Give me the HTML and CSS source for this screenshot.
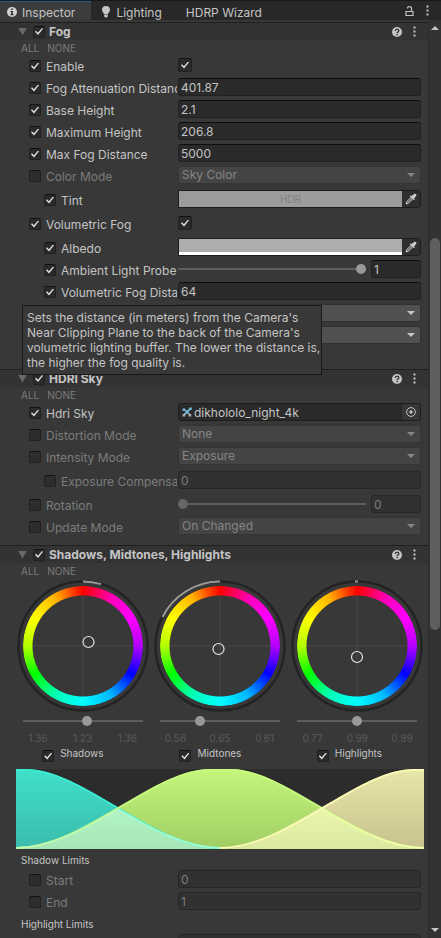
FILE: index.html
```html
<!DOCTYPE html>
<html lang="en">
<head>
<meta charset="utf-8">
<meta name="viewport" content="width=device-width, initial-scale=1">
<title>Inspector</title>
<link rel="stylesheet" href="styles.css">
</head>
<body>
<svg class="defs" width="0" height="0" aria-hidden="true">
  <symbol id="help" viewBox="0 0 10 10"><circle cx="5" cy="5" r="5" fill="#c4c4c4"/><path d="M3.3 4C3.3 1.6 6.8 1.7 6.8 3.8C6.8 5 5.1 4.9 5.1 6.2" fill="none" stroke="#323232" stroke-width="1.3"/><rect x="4.4" y="7" width="1.4" height="1.3" fill="#323232"/></symbol>
  <symbol id="dots" viewBox="0 0 3 11"><path d="M.5 .5h2v2h-2zM.5 4.5h2v2h-2zM.5 8.5h2v2h-2z" fill="#c4c4c4"/></symbol>
  <symbol id="dropper" viewBox="0 0 12 12"><path d="M1 11L1.8 8.6L6 4.4L7.6 6L3.4 10.2Z" fill="#6a6a6a" stroke="#c4c4c4" stroke-width="1"/><path d="M4.8 3.2L5.8 2.2L6.8 3L8.6 1.2Q9.8 .2 11 1.1Q11.9 2.2 10.9 3.4L9 5.2L9.9 6.2L8.8 7.3Z" fill="#c8c8c8"/></symbol>
</svg>

<div class="window">
  <nav class="tabs">
    <button class="tab tab-active"><svg width="10" height="10" viewBox="0 0 10 10"><circle cx="5" cy="5" r="5" fill="#d0d0d0"/><path d="M4.2 1.6h1.7v1.5H4.2zM3.4 4.1h2.5v3.2h.8v1H3.4v-1h.8V5.1h-.8z" fill="#333"/></svg>Inspector</button>
    <button class="tab"><svg width="10" height="12" viewBox="0 0 10 12"><path d="M5 0A4 4 0 0 1 9 4C9 5.8 7.2 6.8 7 8.4H3C2.8 6.8 1 5.8 1 4A4 4 0 0 1 5 0ZM3.2 9H6.8V10.4L5.8 11.6H4.2L3.2 10.4Z" fill="#c4c4c4"/></svg>Lighting</button>
    <button class="tab tab-plain">HDRP Wizard</button>
    <div class="tab-tools">
      <button class="icon-button" aria-label="Lock"><svg width="9" height="10" viewBox="0 0 9 10"><path d="M1 5.5H8V9.5H1ZM2.5 2.5V2Q2.5 .7 4.5 .7Q6.5 .7 6.5 2V5.5" fill="none" stroke="#c4c4c4" stroke-width="1.2"/></svg></button>
      <button class="icon-button" aria-label="Tab menu"><svg width="3" height="11"><use href="#dots"/></svg></button>
    </div>
  </nav>

  <div class="body">
    <main class="content">
      <section class="component">
        <header class="head">
          <button class="fold" aria-label="Collapse"></button>
          <input class="check" type="checkbox" id="fog" checked><label for="fog">Fog</label>
          <button class="icon-button head-help" aria-label="Help"><svg width="10" height="10"><use href="#help"/></svg></button>
          <button class="icon-button" aria-label="Menu"><svg width="3" height="11"><use href="#dots"/></svg></button>
        </header>
        <div class="toggle-all"><button>ALL</button><button>NONE</button></div>

        <div class="row"><div class="name"><input class="check" type="checkbox" id="c1" checked><label for="c1">Enable</label></div><div class="value"><input class="check check-large" type="checkbox" aria-label="Enable" checked></div></div>
        <div class="row"><div class="name"><input class="check" type="checkbox" id="c2" checked><label for="c2">Fog Attenuation Distance</label></div><div class="value"><input class="field" type="text" aria-label="Fog Attenuation Distance" value="401.87"></div></div>
        <div class="row"><div class="name"><input class="check" type="checkbox" id="c3" checked><label for="c3">Base Height</label></div><div class="value"><input class="field" type="text" aria-label="Base Height" value="2.1"></div></div>
        <div class="row"><div class="name"><input class="check" type="checkbox" id="c4" checked><label for="c4">Maximum Height</label></div><div class="value"><input class="field" type="text" aria-label="Maximum Height" value="206.8"></div></div>
        <div class="row"><div class="name"><input class="check" type="checkbox" id="c5" checked><label for="c5">Max Fog Distance</label></div><div class="value"><input class="field" type="text" aria-label="Max Fog Distance" value="5000"></div></div>
        <div class="row off"><div class="name"><input class="check" type="checkbox" id="c6"><label for="c6">Color Mode</label></div><div class="value"><div class="drop"><select aria-label="Color Mode" disabled><option>Sky Color</option></select></div></div></div>
        <div class="group">
          <div class="row"><div class="name"><input class="check" type="checkbox" id="c7" checked><label for="c7">Tint</label></div><div class="value"><div class="color"><button class="swatch swatch-hdr">HDR</button><button class="pick" aria-label="Pick tint"><svg width="12" height="12"><use href="#dropper"/></svg></button></div></div></div>
        </div>
        <div class="row"><div class="name"><input class="check" type="checkbox" id="c8" checked><label for="c8">Volumetric Fog</label></div><div class="value"><input class="check check-large" type="checkbox" aria-label="Volumetric Fog" checked></div></div>
        <div class="group">
          <div class="row"><div class="name"><input class="check" type="checkbox" id="c9" checked><label for="c9">Albedo</label></div><div class="value"><div class="color"><button class="swatch swatch-alpha" aria-label="Albedo color"></button><button class="pick" aria-label="Pick albedo"><svg width="12" height="12"><use href="#dropper"/></svg></button></div></div></div>
          <div class="row"><div class="name"><input class="check" type="checkbox" id="c10" checked><label for="c10">Ambient Light Probe</label></div><div class="value"><input class="slider" type="range" aria-label="Ambient Light Probe" min="0" max="1" step="0.01" value="1"><input class="field field-short" type="text" aria-label="Ambient Light Probe value" value="1"></div></div>
          <div class="row anchor"><div class="name"><input class="check" type="checkbox" id="c11" checked><label for="c11">Volumetric Fog Distance</label></div><div class="value"><input class="field" type="text" aria-label="Volumetric Fog Distance" value="64"></div>
            <div class="tooltip" role="tooltip">Sets the distance (in meters) from the Camera's Near Clipping Plane to the back of the Camera's volumetric lighting buffer. The lower the distance is, the higher the fog quality is.</div>
          </div>
          <div class="row"><div class="name"></div><div class="value"><div class="drop"><select><option></option></select></div></div></div>
          <div class="row"><div class="name"></div><div class="value"><div class="drop"><select><option></option></select></div></div></div>
        </div>
      </section>

      <section class="component component-spaced">
        <header class="head">
          <button class="fold" aria-label="Collapse"></button>
          <input class="check" type="checkbox" id="sky" checked><label for="sky">HDRI Sky</label>
          <button class="icon-button head-help" aria-label="Help"><svg width="10" height="10"><use href="#help"/></svg></button>
          <button class="icon-button" aria-label="Menu"><svg width="3" height="11"><use href="#dots"/></svg></button>
        </header>
        <div class="toggle-all"><button>ALL</button><button>NONE</button></div>

        <div class="row"><div class="name"><input class="check" type="checkbox" id="d1" checked><label for="d1">Hdri Sky</label></div><div class="value"><div class="object"><button class="object-name"><svg width="10" height="10" viewBox="0 0 10 10"><path d="M2 2L8 8" stroke="#8f9698" stroke-width="1.6"/><path d="M2 8L8 2" stroke="#6db8d8" stroke-width="1.8"/><path d="M.5 1.5h2.5v2.5h-2.5zM7.2 .4h2.6v2.6h-2.6zM3.6 3.6h2.8v2.8H3.6z" fill="#6db8d8"/><path d="M.6 7h2.6v2.6H.6zM6.6 6.8h2.6v2.6H6.6z" fill="#a9adaf"/></svg>dikhololo_night_4k</button><button class="pick" aria-label="Select texture"><svg width="10" height="10" viewBox="0 0 10 10"><circle cx="5" cy="5" r="4.4" fill="none" stroke="#c4c4c4" stroke-width="1"/><circle cx="5" cy="5" r="1.7" fill="#c4c4c4"/></svg></button></div></div></div>
        <div class="row off"><div class="name"><input class="check" type="checkbox" id="d2"><label for="d2">Distortion Mode</label></div><div class="value"><div class="drop"><select aria-label="Distortion Mode" disabled><option>None</option></select></div></div></div>
        <div class="row off"><div class="name"><input class="check" type="checkbox" id="d3"><label for="d3">Intensity Mode</label></div><div class="value"><div class="drop"><select aria-label="Intensity Mode" disabled><option>Exposure</option></select></div></div></div>
        <div class="group">
          <div class="row off"><div class="name"><input class="check" type="checkbox" id="d4"><label for="d4">Exposure Compensation</label></div><div class="value"><input class="field" type="text" aria-label="Exposure Compensation" value="0" disabled></div></div>
        </div>
        <div class="row off"><div class="name"><input class="check" type="checkbox" id="d5"><label for="d5">Rotation</label></div><div class="value"><input class="slider" type="range" aria-label="Rotation" min="0" max="360" value="0" disabled><input class="field field-short" type="text" aria-label="Rotation value" value="0" disabled></div></div>
        <div class="row off"><div class="name"><input class="check" type="checkbox" id="d6"><label for="d6">Update Mode</label></div><div class="value"><div class="drop"><select aria-label="Update Mode" disabled><option>On Changed</option></select></div></div></div>
      </section>

      <section class="component component-near">
        <header class="head">
          <button class="fold" aria-label="Collapse"></button>
          <input class="check" type="checkbox" id="smh" checked><label for="smh">Shadows, Midtones, Highlights</label>
          <button class="icon-button head-help" aria-label="Help"><svg width="10" height="10"><use href="#help"/></svg></button>
          <button class="icon-button" aria-label="Menu"><svg width="3" height="11"><use href="#dots"/></svg></button>
        </header>
        <div class="toggle-all"><button>ALL</button><button>NONE</button></div>

        <div class="wheels">
          <div class="trackball">
            <div class="wheel"><div class="hue"></div>
              <svg width="132" height="132" viewBox="0 0 132 132" fill="none"><path d="M66 15V117M15 66H117" stroke="#484848"/><circle cx="66" cy="66" r="64.5" stroke="#232323" stroke-width="2.5"/><path d="M66 1.5A64.5 64.5 0 0 1 84 4.1" stroke="#999" stroke-width="2"/><circle cx="71.5" cy="62" r="5.5" stroke="#e4e4e4" stroke-width="1.2"/></svg></div>
            <input class="slider" type="range" aria-label="Shadows offset" min="0" max="1000" value="536">
            <div class="numbers"><span>1.36</span><span>1.23</span><span>1.36</span></div>
            <div class="caption"><input class="check" type="checkbox" id="w1" checked><label for="w1">Shadows</label></div>
          </div>
          <div class="trackball">
            <div class="wheel"><div class="hue"></div>
              <svg width="132" height="132" viewBox="0 0 132 132" fill="none"><path d="M66 15V117M15 66H117" stroke="#484848"/><circle cx="66" cy="66" r="64.5" stroke="#232323" stroke-width="2.5"/><path d="M8.5 37A64.5 64.5 0 0 1 66 1.5" stroke="#999" stroke-width="2"/><circle cx="64.5" cy="69" r="5.5" stroke="#e4e4e4" stroke-width="1.2"/></svg></div>
            <input class="slider" type="range" aria-label="Midtones offset" min="0" max="1000" value="318">
            <div class="numbers"><span>0.58</span><span>0.65</span><span>0.61</span></div>
            <div class="caption"><input class="check" type="checkbox" id="w2" checked><label for="w2">Midtones</label></div>
          </div>
          <div class="trackball">
            <div class="wheel"><div class="hue"></div>
              <svg width="132" height="132" viewBox="0 0 132 132" fill="none"><path d="M66 15V117M15 66H117" stroke="#484848"/><circle cx="66" cy="66" r="64.5" stroke="#232323" stroke-width="2.5"/><path d="M64 1.5H67" stroke="#999" stroke-width="2"/><circle cx="66" cy="77" r="5.5" stroke="#e4e4e4" stroke-width="1.2"/></svg></div>
            <input class="slider" type="range" aria-label="Highlights offset" min="0" max="1000" value="495">
            <div class="numbers"><span>0.77</span><span>0.99</span><span>0.99</span></div>
            <div class="caption"><input class="check" type="checkbox" id="w3" checked><label for="w3">Highlights</label></div>
          </div>
        </div>

        <svg class="curves" viewBox="0 0 408 80" preserveAspectRatio="none" role="img" aria-label="Tonal ranges">
          <defs>
            <linearGradient id="gs" x2="0" y2="1"><stop stop-color="#3fe0c9"/><stop offset="1" stop-color="#3bbcac"/></linearGradient>
            <linearGradient id="gm" x2="0" y2="1"><stop stop-color="#c4f67c"/><stop offset="1" stop-color="#a1cd64"/></linearGradient>
            <linearGradient id="gh" x2="0" y2="1"><stop stop-color="#e8e6a9"/><stop offset="1" stop-color="#c8c28f"/></linearGradient>
            <linearGradient id="gsm" x2="0" y2="1"><stop stop-color="#b3f4c6"/><stop offset="1" stop-color="#a6e6b8"/></linearGradient>
            <linearGradient id="gmh" x2="0" y2="1"><stop stop-color="#e9f6ac"/><stop offset="1" stop-color="#dbe9a1"/></linearGradient>
          </defs>
          <path d="M0 0H10C68 0 136 80 204 80H0Z" fill="url(#gs)"/>
          <path d="M0 80C68 80 136 0 194 0H214C272 0 340 80 408 80Z" fill="url(#gm)"/>
          <path d="M204 80C272 80 340 0 398 0H408V80Z" fill="url(#gh)"/>
          <path d="M0 80C34 80 68 60 102 40C136 60 170 80 204 80Z" fill="url(#gsm)"/>
          <path d="M204 80C238 80 272 60 306 40C340 60 374 80 408 80Z" fill="url(#gmh)"/>
          <g fill="none" stroke-width="2">
            <path d="M0 1H10C68 1 136 79 204 79" stroke="#3cead1"/>
            <path d="M102 40C136 60 170 79 204 79" stroke="#9dfbcd"/>
            <path d="M0 79C68 79 136 1 194 1H214C272 1 340 79 408 79" stroke="#c8f97f"/>
            <path d="M0 79C34 79 68 60 102 40" stroke="#bbf8b4"/>
            <path d="M306 40C340 60 374 79 408 79" stroke="#effda8"/>
            <path d="M204 79C272 79 340 1 398 1H408" stroke="#fafab5"/>
          </g>
        </svg>

        <h3 class="subhead">Shadow Limits</h3>
        <div class="row off"><div class="name"><input class="check" type="checkbox" id="e1"><label for="e1">Start</label></div><div class="value"><input class="field" type="text" aria-label="Shadow start" value="0" disabled></div></div>
        <div class="row off"><div class="name"><input class="check" type="checkbox" id="e2"><label for="e2">End</label></div><div class="value"><input class="field" type="text" aria-label="Shadow end" value="1" disabled></div></div>
        <h3 class="subhead">Highlight Limits</h3>
        <div class="row off"><div class="name"></div><div class="value"><input class="field" type="text" aria-label="Highlight start" disabled></div></div>
      </section>
    </main>

    <div class="scrollbar">
      <button class="arrow arrow-up" aria-label="Scroll up"></button>
      <div class="track"><div class="thumb"></div></div>
      <button class="arrow arrow-down" aria-label="Scroll down"></button>
    </div>
  </div>
</div>
</body>
</html>
```

FILE: styles.css
```css
* { box-sizing: border-box; }

body {
  margin: 0;
  background: #383838;
  color: #c4c4c4;
  font: 12px/15px Inter, "Liberation Sans", sans-serif;
}

button, input, select {
  margin: 0;
  padding: 0;
  border: 0;
  border-radius: 0;
  background: none;
  color: inherit;
  font: inherit;
}

svg { display: block; flex: none; }
.defs { position: absolute; }

.window { display: flex; flex-direction: column; height: 100vh; overflow: hidden; }

/* Tab bar */
.tabs { display: flex; flex: none; height: 20px; padding-top: 1px; background: #282828; box-shadow: inset 0 1px #191919; }
.tab { display: flex; align-items: center; gap: 5px; padding: 2px 16px 0 7px; border-top: 1px solid transparent; }
.tab-active { background: #3c3c3c; border-top: 1px solid #2c5d87; }
.tab + .tab { padding: 2px 8px 0 10px; }
.tab + .tab-plain { padding-left: 16px; }
.tab-tools { display: flex; align-items: center; gap: 12px; margin-left: auto; padding-right: 12px; }
.icon-button { display: flex; align-items: center; }

.body { display: flex; flex: 1; min-height: 0; }
.content { flex: 1; min-width: 0; padding-top: 2px; overflow: hidden; }

/* Component header */
.component-spaced { margin-top: 22px; }
.component-near { margin-top: 7px; }
.head { display: flex; align-items: center; height: 18px; padding: 0 12px 0 18px; border-top: 1px solid #1f1f1f; background: #333; font-weight: 700; }
.fold { width: 9px; height: 8px; margin-right: 6px; background: #696969; clip-path: polygon(0 0, 100% 0, 50% 100%); }
.head label { margin-left: 4px; }
.head-help { margin-left: auto; margin-right: 11px; }
.toggle-all { display: flex; align-items: flex-start; gap: 8px; height: 15px; padding: 1px 0 0 21px; color: #7c7c7c; font-size: 10px; line-height: 14px; }

/* Property rows */
.row { display: grid; grid-template-columns: 178px 1fr; height: 22px; padding-right: 7px; }
.name { display: flex; align-items: center; gap: 5px; min-width: 0; padding-left: 29px; padding-right: 1px; overflow: hidden; white-space: nowrap; }
.name label { flex: 1; min-width: 0; overflow: hidden; }
.value { display: flex; align-items: center; gap: 5px; min-width: 0; padding-bottom: 2px; }
.group { margin: 2px 0; }
.group .name { padding-left: 44px; }
.off { color: #7c7c7c; }

.check { display: grid; flex: none; place-items: center; width: 12px; height: 12px; appearance: none; background: #2a2a2a; border: 1px solid #212121; border-top-color: #111; border-radius: 2px; }
.check:checked::before { content: ""; width: 8px; height: 7px; background: #e0e0e0; clip-path: polygon(0 52%, 12% 38%, 37% 68%, 88% 0, 100% 12%, 38% 100%); }
.check-large { width: 14px; height: 14px; }
.off .check { background: #2d2d2d; }

.field { flex: 1; min-width: 0; height: 18px; padding: 0 2px; background: #2a2a2a; border: 1px solid #212121; border-top-color: #0d0d0d; border-radius: 3px; }
.field-short { flex: 0 0 50px; }
.field:disabled { background: #313131; border-color: #262626; color: #7c7c7c; }

.drop { display: grid; flex: 1; align-items: center; }
.drop select { grid-area: 1 / 1; width: 100%; height: 18px; padding: 0 20px 1px 3px; appearance: none; background: #515151; border: 1px solid #303030; border-radius: 3px; }
.drop::after { content: ""; grid-area: 1 / 1; z-index: 1; justify-self: end; width: 8px; height: 4px; margin-right: 6px; background: #c4c4c4; clip-path: polygon(0 0, 100% 0, 50% 100%); pointer-events: none; }
.drop select:disabled { background: #444; border-color: #353535; color: #868686; opacity: 1; }
.off .drop::after { background: #868686; }

.color, .object { display: flex; flex: 1; min-width: 0; height: 18px; background: #2a2a2a; border: 1px solid #1c1c1c; border-radius: 0 3px 3px 0; overflow: hidden; }
.swatch { flex: 1; color: #808080; font-size: 10px; }
.swatch-hdr { background: #9c9c9c; }
.swatch-alpha { background: #adadad; border-bottom: 3px solid #fff; }
.pick { display: grid; flex: none; place-items: center; width: 18px; background: #2f2f2f; }
.object { border-radius: 3px; }
.object-name { display: flex; flex: 1; align-items: center; gap: 2px; min-width: 0; padding-left: 3px; }
.object .pick { background: #373737; }

.slider { flex: 1; min-width: 0; height: 10px; appearance: none; }
.slider::-webkit-slider-runnable-track { height: 2px; background: #5e5e5e; }
.slider::-webkit-slider-thumb { width: 10px; height: 10px; margin-top: -4px; appearance: none; background: #999; border-radius: 50%; }
.slider:disabled::-webkit-slider-thumb { background: #666; }

/* Tooltip hangs below the row it describes */
.anchor { position: relative; }
.tooltip { position: absolute; top: 24px; left: 22px; z-index: 2; width: 300px; padding: 4px 0 4px 4px; background: #383838; border: 1px solid #191919; }

/* Color wheels */
.wheels { display: grid; grid-template-columns: repeat(3, 1fr); padding: 2px 2px 0 14px; }
.trackball { display: flex; flex-direction: column; align-items: center; }
.wheel { display: grid; place-items: center; }
.wheel > * { grid-area: 1 / 1; }
.hue {
  width: 120px;
  height: 120px;
  border-radius: 50%;
  background: conic-gradient(#f00, #ff00b4 30deg, #f0f 60deg, #b400ff 90deg, #00f 120deg, #00b4ff 150deg, #0ff 180deg, #00ffb4 210deg, #0f0 240deg, #b4ff00 270deg, #ff0 300deg, #ffb400 330deg, #f00);
  mask: radial-gradient(circle, transparent 50px, #000 51px);
}
.trackball .slider { flex: none; width: 120px; margin-top: 4px; }
.numbers { display: grid; grid-template-columns: repeat(3, 1fr); width: 134px; margin-top: 5px; color: #5a5a5a; font-size: 10px; text-align: center; }
.caption { display: flex; align-items: flex-end; gap: 6px; width: 81px; height: 16px; font-size: 10px; }
.caption label { height: 16px; line-height: 14px; }

.curves { width: calc(100% - 20px); height: 80px; margin: 7px 4px 0 16px; background: #2c2c2c; }
.subhead { height: 20px; margin: 0; padding: 4px 0 0 21px; font-size: 10px; font-weight: 400; }

/* Scrollbar */
.scrollbar { display: flex; flex: none; flex-direction: column; align-items: center; width: 13px; background: #323232; border-left: 1px solid #2e2e2e; }
.arrow { flex: none; width: 8px; height: 4px; margin: 6px 0; background: #c4c4c4; clip-path: polygon(50% 0, 100% 100%, 0 100%); }
.arrow-down { clip-path: polygon(0 0, 100% 0, 50% 100%); }
.track { display: flex; flex: 1; flex-direction: column; width: 10px; }
.track::before { content: ""; flex: 202; }
.track::after { content: ""; flex: 292; }
.thumb { flex: 391; background: #5f5f5f; border-radius: 5px; }
```
